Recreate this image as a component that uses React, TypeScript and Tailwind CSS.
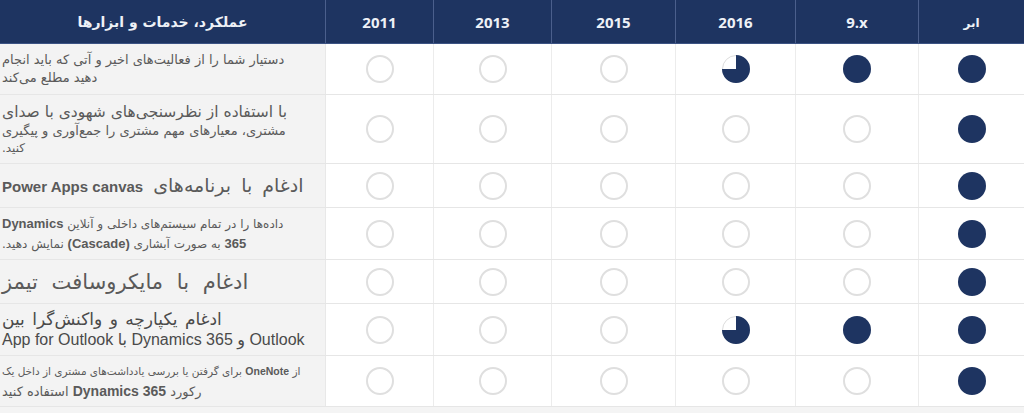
import React from "react";

type Cell = 0 | 0.75 | 1;

const NAVY = "#1e3461";

function Dot({ v }: { v: Cell }) {
  if (v === 0) {
    return <div className="w-[28px] h-[28px] rounded-full border-2 border-[#dfdfdf]" />;
  }
  if (v === 1) {
    return <div className="w-[28px] h-[28px] rounded-full bg-[#1e3461]" />;
  }
  return (
    <svg width="28" height="28" viewBox="0 0 28 28">
      <circle cx="14" cy="14" r="13.5" fill="#ffffff" stroke="#dcdcdc" strokeWidth="1" />
      <path d="M14 14 L14 0 A14 14 0 1 1 0 14 Z" fill={NAVY} />
    </svg>
  );
}

const LAT = { fontFamily: '"Liberation Sans", Arial, sans-serif' };
const FA = { fontFamily: '"DejaVu Sans", sans-serif' };
const HEAD = { fontFamily: '"Open Sans", "Liberation Sans", sans-serif' };

function L({ children, className = "" }: { children: React.ReactNode; className?: string }) {
  return (
    <span className={`font-bold ${className}`} style={LAT}>
      {children}
    </span>
  );
}

const cols = ["2011", "2013", "2015", "2016", "9.x", "ابر"];

const rows: { h: string; vals: Cell[]; content: React.ReactNode }[] = [
  {
    h: "h-[51px]",
    vals: [0, 0, 0, 0.75, 1, 1],
    content: (
      <div className="text-[13px] leading-[18px]">
        <div>دستیار شما را از فعالیت‌های اخیر و آتی که باید انجام</div>
        <div>دهید مطلع می‌کند</div>
      </div>
    ),
  },
  {
    h: "h-[69px]",
    vals: [0, 0, 0, 0, 0, 1],
    content: (
      <div>
        <div className="text-[15.5px] leading-[20px]">با استفاده از نظرسنجی‌های شهودی با صدای</div>
        <div className="text-[13px] leading-[18px]">مشتری، معیارهای مهم مشتری را جمع‌آوری و پیگیری</div>
        <div className="text-[12px] leading-[16px]">کنید.</div>
      </div>
    ),
  },
  {
    h: "h-[44px]",
    vals: [0, 0, 0, 0, 0, 1],
    content: (
      <div className="leading-[22px]">
        <span className="text-[19px] [word-spacing:4px]">ادغام با برنامه‌های </span>
        <L className="text-[15px]">Power Apps canvas</L>
      </div>
    ),
  },
  {
    h: "h-[52px]",
    vals: [0, 0, 0, 0, 0, 1],
    content: (
      <div className="text-[12px] leading-[19px]">
        <div>
          داده‌ها را در تمام سیستم‌های داخلی و آنلاین <L className="text-[13px]">Dynamics</L>
        </div>
        <div>
          <L className="text-[13px]">365</L> به صورت آبشاری <L className="text-[13px]">(Cascade)</L> نمایش دهید.
        </div>
      </div>
    ),
  },
  {
    h: "h-[44px]",
    vals: [0, 0, 0, 0, 0, 1],
    content: <div className="text-[21px] leading-[24px] [word-spacing:7px]">ادغام با مایکروسافت تیمز</div>,
  },
  {
    h: "h-[52px]",
    vals: [0, 0, 0, 0.75, 1, 1],
    content: (
      <div className="text-[#4a4a4a]">
        <div className="text-[17px] leading-[20px] [word-spacing:2px]">ادغام یکپارچه و واکنش‌گرا بین</div>
        <div className="text-[16px] leading-[21px]" style={LAT}>
          Outlook <span style={FA}>و</span> Dynamics 365 <span style={FA}>با</span> App for Outlook
        </div>
      </div>
    ),
  },
  {
    h: "h-[51px]",
    vals: [0, 0, 0, 0, 0, 1],
    content: (
      <div>
        <div className="text-[10.5px] leading-[20px]">
          از <L className="text-[10.5px]">OneNote</L> برای گرفتن یا بررسی یادداشت‌های مشتری از داخل یک
        </div>
        <div className="text-[13px] leading-[20px]">
          رکورد <L className="text-[14px]">Dynamics 365</L> استفاده کنید
        </div>
      </div>
    ),
  },
];

const grid = "grid grid-cols-[326px_108px_118px_124px_120px_123px_105px]";

export default function App() {
  return (
    <div
      className="w-[1024px] h-[413px] overflow-hidden bg-[#f4f4f4]"
      style={{ fontFamily: '"DejaVu Sans", "Noto Sans", sans-serif' }}
    >
      <div className={`${grid} h-[44px] bg-[#1e3461] text-[#eef1f7] border-b border-[#3c5384]`}>
        <div dir="rtl" className="flex items-center justify-center pt-[2px] text-[14px] font-bold border-r border-[#4b5f8c]">
          عملکرد، خدمات و ابزارها
        </div>
        {cols.map((c, i) => (
          <div
            key={c}
            style={i === 5 ? undefined : HEAD}
            className={`flex items-center justify-center pt-[2px] font-bold ${i === 5 ? "text-[12px]" : "text-[15px]"} ${
              i < 5 ? "border-r border-[#4b5f8c]" : ""
            }`}
          >
            {c}
          </div>
        ))}
      </div>
      {rows.map((r, ri) => (
        <div key={ri} className={`${grid} ${r.h} bg-white border-b border-[#e6e6e6]`}>
          <div
            dir="rtl"
            className="flex items-center justify-end pl-[2px] text-left bg-[#f3f3f3] text-[#5a5a5a] whitespace-nowrap overflow-hidden border-r border-[#e8e8e8]"
          >
            {r.content}
          </div>
          {r.vals.map((v, ci) => (
            <div
              key={ci}
              className={`flex items-center justify-center ${ci < 5 ? "border-r border-[#ececec]" : ""}`}
            >
              <Dot v={v} />
            </div>
          ))}
        </div>
      ))}
    </div>
  );
}
